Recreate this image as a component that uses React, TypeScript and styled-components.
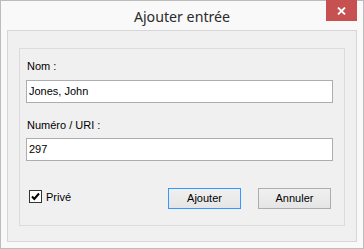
import React from "react";
import styled, { createGlobalStyle } from "styled-components";

const Global = createGlobalStyle`
  html, body { margin: 0; padding: 0; background: #ffffff; }
  body { font-family: "Liberation Sans", Arial, sans-serif; font-size: 11px; color: #000; }
  * { box-sizing: border-box; }
`;

const Window = styled.div`
  width: 364px;
  height: 249px;
  border: 1px solid #bcbcbc;
  background: #f9f9f9;
  display: flex;
  flex-direction: column;
  position: relative;
`;

const TitleBar = styled.div`
  height: 29px;
  flex: none;
  display: flex;
  align-items: center;
  justify-content: center;
  position: relative;
`;

const Title = styled.div`
  font-family: "Noto Sans", "Open Sans", sans-serif;
  font-size: 14.2px;
  color: #2b2b2b;
  margin-top: 1px;
`;

const CloseButton = styled.div`
  position: absolute;
  top: -1px;
  right: 6px;
  width: 31px;
  height: 21px;
  background: #c75050;
  display: flex;
  align-items: center;
  justify-content: center;
`;

const Body = styled.div`
  flex: 1;
  display: flex;
  padding: 0 6px 6px 6px;
`;

const Panel = styled.div`
  flex: 1;
  background: #f0f0f0;
  border: 1px solid #d6d6d6;
  padding: 17px 11px 15px 11px;
  display: flex;
`;

const GroupBox = styled.div`
  flex: 1;
  border: 1px solid #dcdcdc;
  padding: 11px 11px 0 6px;
  display: flex;
  flex-direction: column;
`;

const Label = styled.div<{ $top?: number }>`
  line-height: 13px;
  height: 13px;
  margin-top: ${(p) => p.$top ?? 0}px;
  padding-left: 1px;
`;

const TextBox = styled.div<{ $top: number }>`
  height: 23px;
  margin-top: ${(p) => p.$top}px;
  background: #ffffff;
  border: 1px solid #abadb3;
  padding-left: 2px;
  display: flex;
  align-items: center;
  line-height: 13px;
`;

const BottomRow = styled.div`
  margin-top: 27px;
  display: flex;
  align-items: center;
  padding: 0 2px 0 3px;
`;

const CheckLabel = styled.div`
  display: flex;
  align-items: center;
  gap: 4px;
  margin-bottom: 4px;
`;

const CheckBox = styled.div`
  width: 13px;
  height: 13px;
  border: 1px solid #333333;
  background: #ffffff;
  display: flex;
  align-items: center;
  justify-content: center;
`;

const Spacer = styled.div`
  flex: 1;
`;

const Buttons = styled.div`
  display: flex;
  gap: 17px;
`;

const Button = styled.div<{ $default?: boolean }>`
  width: 73px;
  height: 21px;
  border: 1px solid ${(p) => (p.$default ? "#3399ff" : "#adadad")};
  background: linear-gradient(#f0f0f0, #e5e5e5);
  display: flex;
  align-items: center;
  justify-content: center;
  line-height: 13px;
`;

export default function App() {
  return (
    <>
      <Global />
      <Window>
        <TitleBar>
          <Title>Ajouter entrée</Title>
          <CloseButton>
            <svg width="9" height="8" viewBox="0 0 9 8">
              <path d="M1 0.5 L8 7.5 M8 0.5 L1 7.5" stroke="#ffffff" strokeWidth="1.8" />
            </svg>
          </CloseButton>
        </TitleBar>
        <Body>
          <Panel>
            <GroupBox>
              <Label>Nom :</Label>
              <TextBox $top={7}>Jones, John</TextBox>
              <Label $top={16}>Numéro / URI :</Label>
              <TextBox $top={6}>297</TextBox>
              <BottomRow>
                <CheckLabel>
                  <CheckBox>
                    <svg width="9" height="9" viewBox="0 0 9 9">
                      <path d="M1 4.5 L3.3 7 L8 1.5" stroke="#000" strokeWidth="2" fill="none" />
                    </svg>
                  </CheckBox>
                  <span>Privé</span>
                </CheckLabel>
                <Spacer />
                <Buttons>
                  <Button $default>Ajouter</Button>
                  <Button>Annuler</Button>
                </Buttons>
              </BottomRow>
            </GroupBox>
          </Panel>
        </Body>
      </Window>
    </>
  );
}
